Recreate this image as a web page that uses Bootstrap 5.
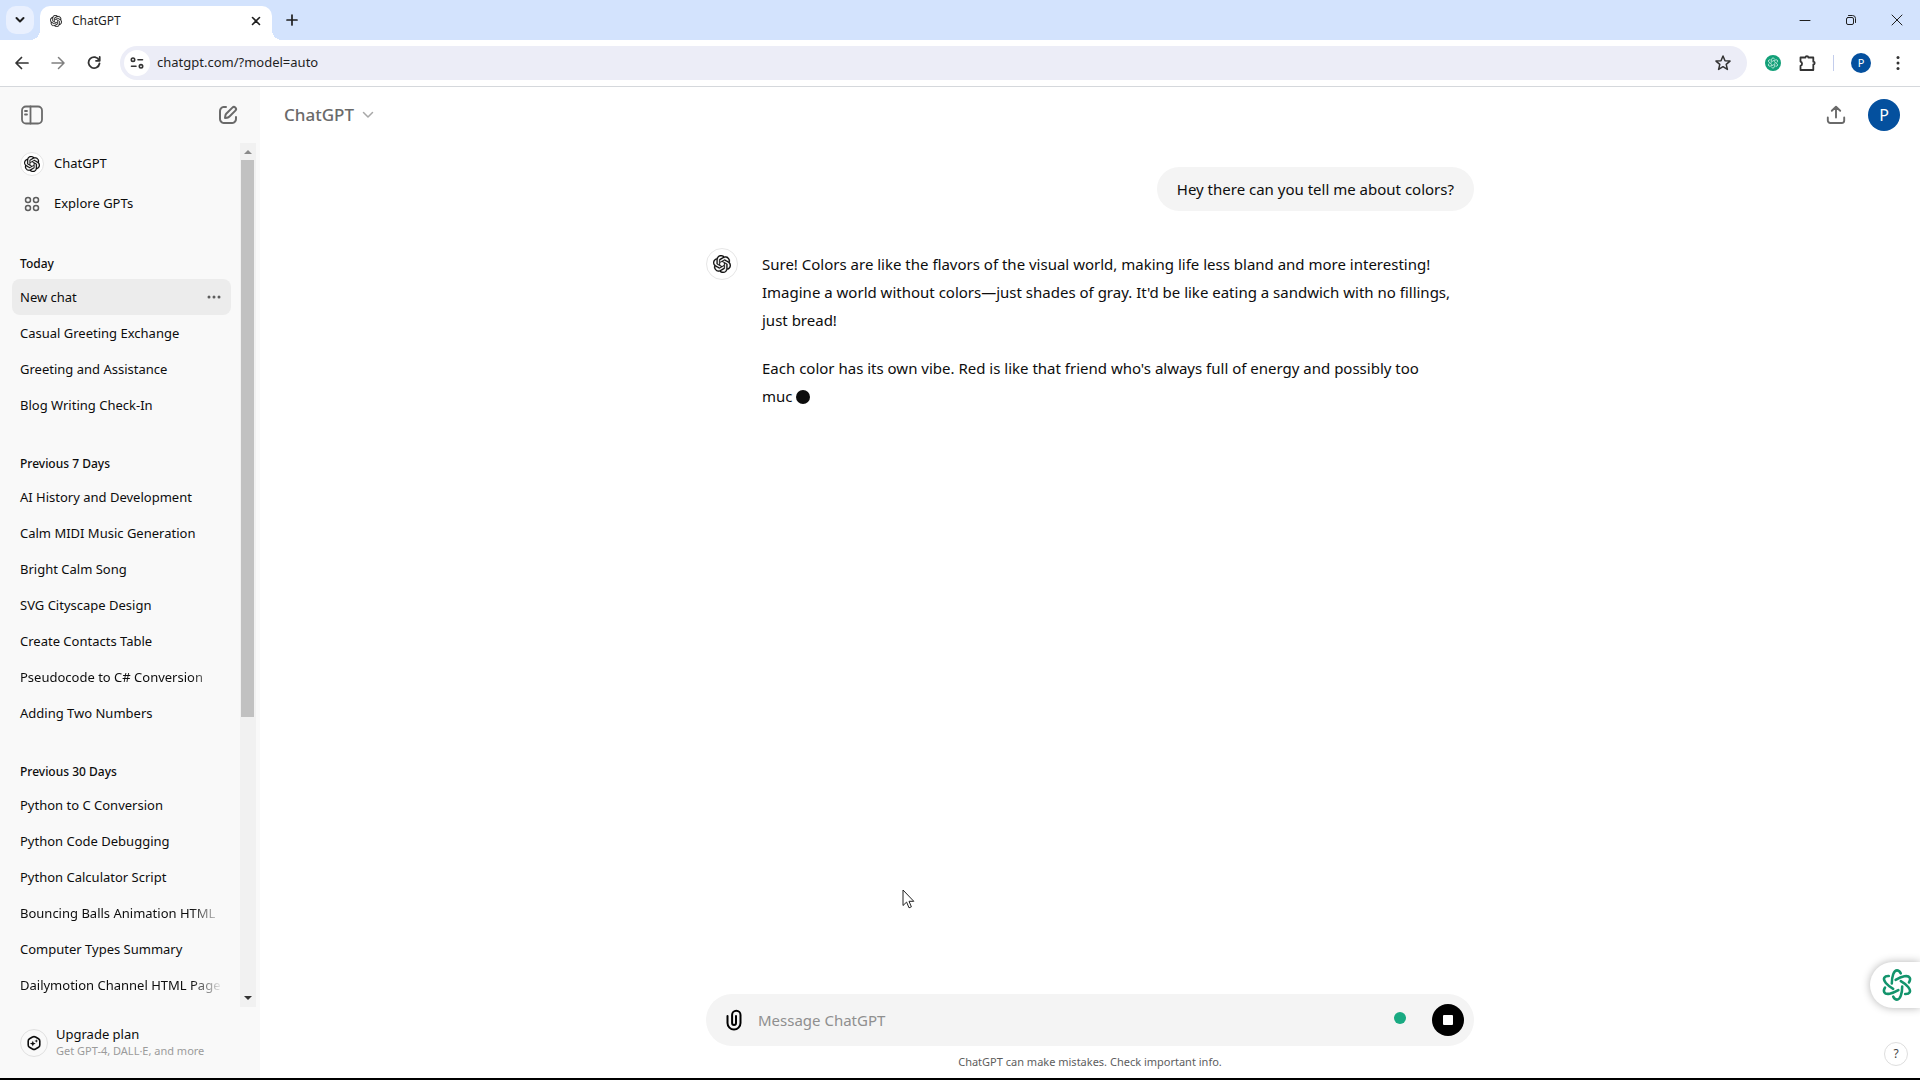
<!DOCTYPE html>
<html lang="en">
<head>
<meta charset="utf-8">
<meta name="viewport" content="width=device-width, initial-scale=1">
<title>ChatGPT</title>
<link href="https://cdn.jsdelivr.net/npm/bootstrap@5.3.0/dist/css/bootstrap.min.css" rel="stylesheet">
<style>
  body { height: 100vh; font-family: "Noto Sans", "Open Sans", sans-serif; font-size: 13px; color: #0d0d0d; background: #fff; overflow: hidden; border-bottom: 2px solid #000; }
  svg { display: block; flex: none; }
  .stroke-icon { fill: none; stroke: currentColor; stroke-linecap: round; stroke-linejoin: round; }
  .plain-btn { border: 0; padding: 0; background: none; color: inherit; display: flex; align-items: center; justify-content: center; flex: none; }
  .fill-rest { min-height: 0; }

  .tab-strip { height: 40px; background: #d3e3fd; color: #1f1f1f; }
  .tab-search { width: 28px; height: 28px; border-radius: 10px; background: #e9f0fe; margin: 6px; }
  .browser-tab { width: 232px; height: 34px; border-radius: 10px 10px 0 0; background: #fff; font-size: 12px; padding: 0 11px 0 10px; gap: 10px; position: relative; }
  .browser-tab::before, .browser-tab::after { content: ""; position: absolute; bottom: 0; width: 10px; height: 10px; }
  .browser-tab::before { left: -10px; background: radial-gradient(circle at 0 0, transparent 10px, #fff 10px); }
  .browser-tab::after { right: -10px; background: radial-gradient(circle at 100% 0, transparent 10px, #fff 10px); }
  .window-btn { width: 46px; height: 32px; }

  .toolbar { height: 47px; border-bottom: 1px solid #d5d8dc; background: #fff; color: #333; }
  .nav-btn { width: 36px; height: 34px; }
  .omnibox { height: 34px; border-radius: 17px; background: #ecedf7; padding: 0 15px 0 4px; margin: 0 18px 0 8px; }
  .site-info { width: 26px; height: 26px; border-radius: 50%; background: #fff; }
  .omnibox input { border: 0; background: none; outline: 0; font-size: 13px; color: #1f1f1f; padding: 0; margin-left: 7px; }
  .toolbar-end { gap: 17px; padding-right: 20px; }
  .toolbar-rule { width: 1px; height: 16px; background: #c3cdec; }
  .profile { background: #04509e; color: #fff; border-radius: 50%; }
  .profile-sm { width: 20px; height: 20px; font-size: 11px; }
  .profile-lg { width: 32px; height: 32px; font-size: 16px; }

  .sidebar { width: 260px; background: #f9f9f9; }
  .side-head { height: 56px; padding: 0 20px; color: #6a6a6a; }
  .side-list { padding: 1px 9px 0 12px; overflow: hidden; }
  .side-list a { color: inherit; text-decoration: none; white-space: nowrap; overflow: hidden; padding: 0 8px; border-radius: 8px; }
  .gpt-link { height: 40px; gap: 10px; }
  .gpt-mark { width: 24px; height: 24px; border-radius: 50%; border: 1px solid #e4e4e4; background: #fff; }
  .group-title { font-size: 12px; font-weight: 500; line-height: 18px; margin: 0; padding: 32px 8px 6px; }
  .gpt-link + .group-title { padding-top: 31px; }
  .chat-row { height: 36px; line-height: 36px; }
  .chat-row.current { background: #ececec; color: #0d0d0d; }
  .faded { -webkit-mask-image: linear-gradient(to left, transparent 8px, #000 40px); mask-image: linear-gradient(to left, transparent 8px, #000 40px); }
  .rail { width: 16px; margin-right: 4px; background: #f1f1f1; padding: 0 2px 0 1px; }
  .rail-end { height: 17px; }
  .rail-thumb { background: #c1c1c1; flex: 557 0 0; }
  .rail-rest { flex: 273 0 0; }
  .side-foot { height: 71px; padding: 1px 20px 0; gap: 8px; }
  .plan-mark { width: 28px; height: 28px; border-radius: 50%; border: 1px solid #e0e0e0; }
  .plan-note { font-size: 11px; line-height: 18px; color: #9b9b9b; }

  .main-head { height: 56px; padding: 0 20px 0 24px; color: #6a6a6a; }
  .model-btn { font-size: 17px; font-weight: 500; gap: 8px; }
  .share-btn { margin-right: 22px; }
  .thread { width: 100%; max-width: 768px; margin: 0 auto; font-size: 15px; line-height: 28px; }
  .bubble { background: #f4f4f4; border-radius: 22px; padding: 8px 20px; }
  .reply { margin-top: 39px; padding-right: 16px; }
  .reply-mark { width: 32px; height: 32px; border-radius: 50%; border: 1px solid #e6e6e6; margin-top: -2px; }
  .typing { display: inline-block; width: 14px; height: 14px; border-radius: 50%; background: #0d0d0d; vertical-align: -2px; }
  .composer { height: 52px; border-radius: 26px; background: #f4f4f4; padding: 0 10px 0 16px; }
  .composer input { border: 0; background: none; outline: 0; font-size: 15px; padding: 0; margin-left: 12px; }
  .composer input::placeholder { color: #8f8f8f; opacity: 1; }
  .green-dot { width: 12px; height: 12px; border-radius: 50%; background: #19aa82; margin: 0 26px 4px 0; }
  .stop-btn { width: 32px; height: 32px; border-radius: 50%; background: #000; }
  .notice { font-size: 11px; line-height: 32px; color: #5d5d5d; }

  .float-tab { position: absolute; right: 0; bottom: 70px; width: 50px; height: 46px; padding-left: 4px; border-radius: 23px 0 0 23px; background: #fff; box-shadow: 0 0 8px rgba(0,0,0,.3); color: #12946c; }
  .help-btn { position: absolute; right: 12px; bottom: 12px; width: 24px; height: 24px; border: 1px solid #dedede; border-radius: 50%; background: #fff; font-size: 12px; color: #444; }
  .pointer { position: absolute; left: 642px; top: 802px; }
</style>
<script src="https://cdn.jsdelivr.net/npm/bootstrap@5.3.0/dist/js/bootstrap.bundle.min.js"></script>
</head>
<body class="d-flex flex-column">
<svg width="0" height="0" class="position-absolute" aria-hidden="true">
  <symbol id="knot" viewBox="0 0 24 24"><path fill="currentColor" stroke="currentColor" stroke-width=".3" d="M22.2819 9.8211a5.9847 5.9847 0 0 0-.5157-4.9108 6.0462 6.0462 0 0 0-6.5098-2.9A6.0651 6.0651 0 0 0 4.9807 4.1818a5.9847 5.9847 0 0 0-3.9977 2.9 6.0462 6.0462 0 0 0 .7427 7.0966 5.98 5.98 0 0 0 .511 4.9107 6.051 6.051 0 0 0 6.5146 2.9001A5.9847 5.9847 0 0 0 13.2599 24a6.0557 6.0557 0 0 0 5.7718-4.2058 5.9894 5.9894 0 0 0 3.9977-2.9001 6.0557 6.0557 0 0 0-.7475-7.0729zm-9.022 12.6081a4.4755 4.4755 0 0 1-2.8764-1.0408l.1419-.0804 4.7783-2.7582a.7948.7948 0 0 0 .3927-.6813v-6.7369l2.02 1.1686a.071.071 0 0 1 .038.052v5.5826a4.504 4.504 0 0 1-4.4945 4.4944zm-9.6607-4.1254a4.4708 4.4708 0 0 1-.5346-3.0137l.142.0852 4.783 2.7582a.7712.7712 0 0 0 .7806 0l5.8428-3.3685v2.3324a.0804.0804 0 0 1-.0332.0615L9.74 19.9502a4.4992 4.4992 0 0 1-6.1408-1.6464zM2.3408 7.8956a4.485 4.485 0 0 1 2.3655-1.9728V11.6a.7664.7664 0 0 0 .3879.6765l5.8144 3.3543-2.0201 1.1685a.0757.0757 0 0 1-.071 0l-4.8303-2.7865A4.504 4.504 0 0 1 2.3408 7.872zm16.5963 3.8558L13.1038 8.364 15.1192 7.2a.0757.0757 0 0 1 .071 0l4.8303 2.7913a4.4944 4.4944 0 0 1-.6765 8.1042v-5.6772a.79.79 0 0 0-.407-.667zm2.0107-3.0231l-.142-.0852-4.7735-2.7818a.7759.7759 0 0 0-.7854 0L9.409 9.2297V6.8974a.0662.0662 0 0 1 .0284-.0615l4.8303-2.7866a4.4992 4.4992 0 0 1 6.6802 4.66zM8.3065 12.863l-2.02-1.1638a.0804.0804 0 0 1-.038-.0567V6.0742a4.4992 4.4992 0 0 1 7.3757-3.4537l-.142.0805L8.704 5.459a.7948.7948 0 0 0-.3927.6813zm1.0976-2.3654l2.602-1.4998 2.6069 1.4998v2.9994l-2.5974 1.4997-2.6067-1.4997Z"/></symbol>
  <symbol id="flower" viewBox="-16 -18 32 36"><g fill="none" stroke="currentColor" stroke-linecap="round">
    <path id="petal" d="M-5.5 -1.5C-5.5 -9 -3.5 -15.5 0 -15.5C1.600 -15.500 3 -14.300 4 -12.300"/>
    <use href="#petal" transform="rotate(60)"/><use href="#petal" transform="rotate(120)"/><use href="#petal" transform="rotate(180)"/><use href="#petal" transform="rotate(240)"/><use href="#petal" transform="rotate(300)"/></g></symbol>
</svg>

<header>
  <div class="tab-strip d-flex align-items-start">
    <button class="plain-btn tab-search" aria-label="Search tabs"><svg width="10" height="8" viewBox="0 0 10 8" class="stroke-icon" stroke-width="2"><path d="M1.500 2 5 5.500 8.500 2"/></svg></button>
    <div class="browser-tab d-flex align-items-center align-self-end pb-1">
      <svg width="12" height="12"><use href="#knot"/></svg>
      <span class="flex-grow-1 lh-1">ChatGPT</span>
      <button class="plain-btn" aria-label="Close tab"><svg width="10" height="10" viewBox="0 0 10 10" class="stroke-icon" stroke-width="1.600"><path d="M1.500 1.500 8.500 8.500M8.500 1.500 1.500 8.500"/></svg></button>
    </div>
    <button class="plain-btn ms-1 mt-1 p-1" aria-label="New tab"><svg width="24" height="24" viewBox="0 0 24 24" class="stroke-icon" stroke-width="1.700"><path d="M12 7v10M7 12h10"/></svg></button>
    <div class="ms-auto d-flex mt-1">
      <button class="plain-btn window-btn" aria-label="Minimize"><svg width="12" height="12" viewBox="0 0 12 12" class="stroke-icon"><path d="M1 6.500h10"/></svg></button>
      <button class="plain-btn window-btn" aria-label="Restore"><svg width="12" height="12" viewBox="0 0 12 12" class="stroke-icon"><rect x="1.500" y="3.500" width="7" height="7" rx="1.500"/><path d="M3.500 1.500h4a3 3 0 0 1 3 3v4"/></svg></button>
      <button class="plain-btn window-btn" aria-label="Close window"><svg width="12" height="12" viewBox="0 0 12 12" class="stroke-icon"><path d="M1 1 11 11M11 1 1 11"/></svg></button>
    </div>
  </div>
  <div class="toolbar d-flex align-items-center">
    <div class="d-flex ms-1">
      <button class="plain-btn nav-btn" aria-label="Back"><svg width="14" height="14" viewBox="0 0 14 14" class="stroke-icon" stroke-width="1.700"><path d="M13 7H1.500M6.500 1.500 1 7l5.500 5.500"/></svg></button>
      <button class="plain-btn nav-btn text-black-50" aria-label="Forward"><svg width="14" height="14" viewBox="0 0 14 14" class="stroke-icon" stroke-width="1.500"><path d="M1 7h11.500M7.500 1.500 13 7l-5.500 5.500"/></svg></button>
      <button class="plain-btn nav-btn" aria-label="Reload"><svg width="14" height="14" viewBox="0 0 14 14" class="stroke-icon" stroke-width="1.800"><path d="M12 4.200A5.500 5.500 0 1 0 12.500 7.500M12.700 1v3.800H9"/></svg></button>
    </div>
    <div class="omnibox d-flex align-items-center flex-grow-1">
      <button class="plain-btn site-info" aria-label="Site information"><svg width="14" height="12" viewBox="0 0 14 12" class="stroke-icon" stroke-width="1.600"><circle cx="3" cy="2.700" r="1.700"/><path d="M8 2.700h4.500M1.500 9.300H6"/><circle cx="11" cy="9.300" r="1.700"/></svg></button>
      <input class="flex-grow-1" type="text" aria-label="Address" value="chatgpt.com/?model=auto">
      <button class="plain-btn" aria-label="Bookmark"><svg width="18" height="18" viewBox="0 0 18 18" class="stroke-icon" stroke-width="1.500"><path d="m9 2 2 4.700 5 .4-3.800 3.300 1.200 5L9 12.700l-4.400 2.700 1.200-5L2 7.100l5-.4z"/></svg></button>
    </div>
    <div class="toolbar-end d-flex align-items-center">
      <button class="plain-btn" aria-label="Extension"><svg width="16" height="16" viewBox="0 0 16 16"><circle cx="8" cy="8" r="8" fill="#12a078"/><svg x="2" y="2" width="12" height="12" color="#fff" stroke-width="2"><use href="#flower"/></svg></svg></button>
      <button class="plain-btn" aria-label="Extensions"><svg width="18" height="18" viewBox="0 0 18 18" class="stroke-icon" stroke-width="1.800"><path d="M2.500 3.500h5a1.400 1.400 0 0 1 2.800 0h5v4.200a1.400 1.400 0 0 1 0 2.800v5.500H2.500v-4.200a2.200 2.200 0 0 0 0-4.200z"/></svg></button>
      <span class="toolbar-rule"></span>
      <button class="plain-btn profile profile-sm" aria-label="Profile">P</button>
      <button class="plain-btn ms-2" aria-label="Menu"><svg width="4" height="16" viewBox="0 0 4 16"><g fill="#333"><circle cx="2" cy="2.500" r="1.500"/><circle cx="2" cy="8" r="1.500"/><circle cx="2" cy="13.500" r="1.500"/></g></svg></button>
    </div>
  </div>
</header>

<div class="fill-rest d-flex flex-grow-1">
  <aside class="sidebar d-flex flex-column flex-shrink-0">
    <div class="side-head d-flex align-items-center justify-content-between flex-shrink-0">
      <button class="plain-btn" aria-label="Close sidebar"><svg width="24" height="20" viewBox="0 0 24 20" class="stroke-icon" stroke-width="1.800"><rect x="2" y="1.500" width="20" height="17" rx="4"/><path d="M10.500 1.500v17M5 6h2M5 9.500h2"/></svg></button>
      <button class="plain-btn" aria-label="New chat"><svg width="24" height="24" viewBox="0 0 24 24" fill="currentColor"><path d="M15.673 3.913a3.121 3.121 0 1 1 4.414 4.414l-5.937 5.937a5 5 0 0 1-2.828 1.415l-2.180.311a1 1 0 0 1-1.132-1.132l.311-2.180A5 5 0 0 1 9.736 9.850zm3 1.414a1.121 1.121 0 0 0-1.586 0l-5.937 5.937a3 3 0 0 0-.849 1.697l-.123.860.860-.123a3 3 0 0 0 1.697-.849l5.937-5.937a1.121 1.121 0 0 0 0-1.585M11 4a1 1 0 0 1-1 1c-.998 0-1.702.008-2.253.060-.540.052-.862.141-1.109.267a3 3 0 0 0-1.311 1.311c-.134.263-.226.611-.276 1.216C5.001 8.471 5 9.264 5 10.400v3.200c0 1.137 0 1.929.051 2.546.050.605.142.953.276 1.216a3 3 0 0 0 1.311 1.311c.263.134.611.226 1.216.276.617.050 1.410.051 2.546.051h3.200c1.137 0 1.929 0 2.546-.051.605-.050.953-.142 1.216-.276a3 3 0 0 0 1.311-1.311c.126-.247.215-.569.266-1.108.053-.552.060-1.256.060-2.255a1 1 0 1 1 2 .002c0 .978-.006 1.780-.069 2.442-.064.673-.192 1.270-.475 1.827a5 5 0 0 1-2.185 2.185c-.592.302-1.232.428-1.961.487C15.600 21 14.727 21 13.643 21h-3.286c-1.084 0-1.958 0-2.666-.058-.728-.060-1.369-.185-1.960-.487a5 5 0 0 1-2.186-2.185c-.302-.592-.428-1.233-.487-1.961C3 15.600 3 14.727 3 13.643v-3.286c0-1.084 0-1.958.058-2.666.060-.729.185-1.369.487-1.961A5 5 0 0 1 5.730 3.545c.556-.284 1.154-.411 1.827-.475C8.220 3.007 9.021 3 10 3a1 1 0 0 1 1 1"/></svg></button>
    </div>
    <div class="fill-rest d-flex flex-grow-1">
      <nav class="side-list flex-grow-1 d-flex flex-column">
        <a href="#" class="gpt-link d-flex align-items-center flex-shrink-0"><span class="gpt-mark d-flex align-items-center justify-content-center"><svg width="16" height="16"><use href="#knot"/></svg></span>ChatGPT</a>
        <a href="#" class="gpt-link d-flex align-items-center flex-shrink-0"><svg width="24" height="24" viewBox="0 0 24 24" class="stroke-icon" stroke-width="1.500" color="#5d5d5d"><circle cx="8" cy="8" r="2.500"/><circle cx="16" cy="8" r="2.500"/><circle cx="8" cy="16" r="2.500"/><circle cx="16" cy="16" r="2.500"/></svg>Explore GPTs</a>
        <h3 class="group-title">Today</h3>
        <a href="#" class="chat-row current d-flex align-items-center justify-content-between flex-shrink-0">New chat<svg width="18" height="6" viewBox="0 0 18 6" fill="#5d5d5d"><circle cx="4" cy="3" r="1.500"/><circle cx="9" cy="3" r="1.500"/><circle cx="14" cy="3" r="1.500"/></svg></a>
        <a href="#" class="chat-row flex-shrink-0">Casual Greeting Exchange</a>
        <a href="#" class="chat-row flex-shrink-0">Greeting and Assistance</a>
        <a href="#" class="chat-row flex-shrink-0">Blog Writing Check-In</a>
        <h3 class="group-title">Previous 7 Days</h3>
        <a href="#" class="chat-row flex-shrink-0">AI History and Development</a>
        <a href="#" class="chat-row flex-shrink-0">Calm MIDI Music Generation</a>
        <a href="#" class="chat-row flex-shrink-0">Bright Calm Song</a>
        <a href="#" class="chat-row flex-shrink-0">SVG Cityscape Design</a>
        <a href="#" class="chat-row flex-shrink-0">Create Contacts Table</a>
        <a href="#" class="chat-row faded flex-shrink-0">Pseudocode to C# Conversion</a>
        <a href="#" class="chat-row flex-shrink-0">Adding Two Numbers</a>
        <h3 class="group-title">Previous 30 Days</h3>
        <a href="#" class="chat-row flex-shrink-0">Python to C Conversion</a>
        <a href="#" class="chat-row flex-shrink-0">Python Code Debugging</a>
        <a href="#" class="chat-row flex-shrink-0">Python Calculator Script</a>
        <a href="#" class="chat-row faded flex-shrink-0">Bouncing Balls Animation HTML</a>
        <a href="#" class="chat-row flex-shrink-0">Computer Types Summary</a>
        <a href="#" class="chat-row faded flex-shrink-0">Dailymotion Channel HTML Page</a>
      </nav>
      <div class="rail d-flex flex-column flex-shrink-0" aria-hidden="true">
        <div class="rail-end d-flex align-items-center justify-content-center"><svg width="8" height="5" viewBox="0 0 8 5"><path fill="#8a8a8a" d="M0 5 4 1l4 4z"/></svg></div>
        <div class="rail-thumb"></div>
        <div class="rail-rest"></div>
        <div class="rail-end d-flex align-items-center justify-content-center"><svg width="8" height="5" viewBox="0 0 8 5"><path fill="#333" d="M0 0 4 4l4-4z"/></svg></div>
      </div>
    </div>
    <div class="side-foot d-flex align-items-center flex-shrink-0">
      <span class="plan-mark d-flex align-items-center justify-content-center"><svg width="16" height="16" viewBox="0 0 16 16" class="stroke-icon" stroke-width="1.600"><path d="M6.500 2Q8 1.200 9.500 2l3 1.700Q13.800 4.500 13.800 6v4q0 1.500-1.300 2.300l-3 1.700Q8 14.800 6.500 14l-3-1.700Q2.200 11.500 2.200 10V6q0-1.500 1.300-2.300z"/><path fill="currentColor" stroke="none" d="m6.800 5.700.8 2.100 2.100.8-2.100.8-.8 2.100-.8-2.100-2.100-.8 2.100-.8zM10.300 4.200l.5 1.300 1.300.5-1.300.5-.5 1.300-.5-1.300-1.300-.5 1.300-.5z"/></svg></span>
      <div><div class="lh-sm">Upgrade plan</div><div class="plan-note">Get GPT-4, DALL·E, and more</div></div>
    </div>
  </aside>

  <main class="flex-grow-1 d-flex flex-column position-relative">
    <div class="main-head d-flex align-items-center justify-content-between flex-shrink-0">
      <button class="plain-btn model-btn">ChatGPT<svg width="12" height="8" viewBox="0 0 12 8" class="stroke-icon" stroke-width="1.500" color="#a8a8a8"><path d="M1.500 1.500 6 6l4.500-4.500"/></svg></button>
      <div class="d-flex align-items-center">
        <button class="plain-btn share-btn" aria-label="Share"><svg width="20" height="20" viewBox="0 0 20 20" class="stroke-icon" stroke-width="1.900"><path d="M10 12.500V2M5.800 5.800 10 1.800l4.200 4M1.800 12.500v3a2.500 2.500 0 0 0 2.500 2.500h11.400a2.500 2.500 0 0 0 2.500-2.500v-3"/></svg></button>
        <button class="plain-btn profile profile-lg" aria-label="Account">P</button>
      </div>
    </div>
    <div class="thread pt-4 flex-grow-1">
      <div class="d-flex justify-content-end"><div class="bubble">Hey there can you tell me about colors?</div></div>
      <div class="reply d-flex align-items-start">
        <span class="reply-mark d-flex align-items-center justify-content-center flex-shrink-0 me-4"><svg width="18" height="18"><use href="#knot"/></svg></span>
        <div>
          <p class="mb-3 pb-1">Sure! Colors are like the flavors of the visual world, making life less bland and more interesting! Imagine a world without colors—just shades of gray. It'd be like eating a sandwich with no fillings, just bread!</p>
          <p class="mb-0">Each color has its own vibe. Red is like that friend who's always full of energy and possibly too <span class="text-nowrap">muc <span class="typing"></span></span></p>
        </div>
      </div>
    </div>
    <div class="thread flex-shrink-0">
      <div class="composer d-flex align-items-center">
        <button class="plain-btn" aria-label="Attach file"><svg width="24" height="24" viewBox="0 0 24 24" class="stroke-icon" stroke-width="2" color="#000"><path d="M5.500 8v7a6.500 6.500 0 0 0 13 0V7a4.200 4.200 0 0 0-8.400 0v8a1.900 1.900 0 0 0 3.900 0V8"/></svg></button>
        <input class="flex-grow-1" type="text" aria-label="Message" placeholder="Message ChatGPT">
        <span class="green-dot"></span>
        <button class="plain-btn stop-btn" aria-label="Stop generating"><svg width="10" height="10"><rect width="10" height="10" rx="1" fill="#fff"/></svg></button>
      </div>
      <div class="notice text-center">ChatGPT can make mistakes. Check important info.</div>
    </div>
    <button class="plain-btn float-tab" aria-label="Assistant"><svg width="32" height="34" stroke-width="2.700"><use href="#flower"/></svg></button>
    <button class="plain-btn help-btn" aria-label="Help">?</button>
    <svg class="pointer" width="13" height="20" viewBox="0 0 13 20"><path d="M1 1v15.500l3.600-3.400L7 18.800l2.400-1-2.400-5.500h4.800z" fill="#fff" stroke="#222"/></svg>
  </main>
</div>
</body>
</html>
